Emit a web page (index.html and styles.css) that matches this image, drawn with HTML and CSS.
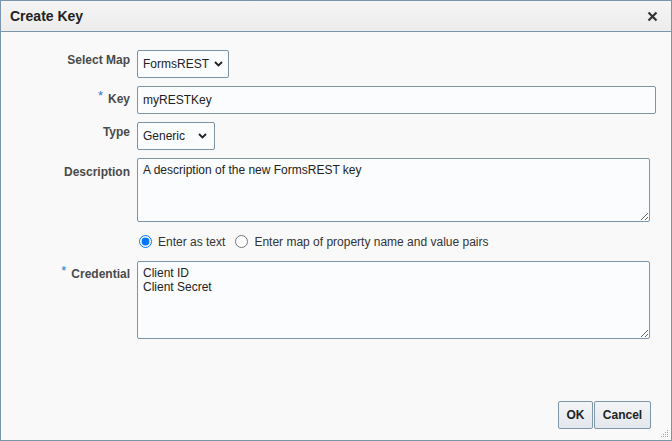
FILE: index.html
```html
<!DOCTYPE html>
<html lang="en">
<head>
<meta charset="utf-8">
<title>Create Key</title>
<link rel="stylesheet" href="styles.css">
</head>
<body>
<div class="dialog">
  <div class="header">
    <span class="title">Create Key</span>
    <svg class="close" width="11" height="11" viewBox="0 0 11 11"><path d="M1.5 1.5 L9.5 9.5 M9.5 1.5 L1.5 9.5" stroke="#333" stroke-width="2.2" fill="none"/></svg>
  </div>
  <div class="form">
    <div class="label l-select">Select Map</div>
    <div class="field"><div class="select sel-map"><span>FormsREST</span><svg width="9" height="6" viewBox="0 0 9 6"><path d="M1 1 L4.5 4.5 L8 1" stroke="#222" stroke-width="1.8" fill="none"/></svg></div></div>

    <div class="label l-key"><span class="req">*</span>Key</div>
    <div class="field"><input class="text key" type="text" value="myRESTKey"></div>

    <div class="label l-select">Type</div>
    <div class="field"><div class="select sel-type"><span>Generic</span><svg width="9" height="6" viewBox="0 0 9 6"><path d="M1 1 L4.5 4.5 L8 1" stroke="#222" stroke-width="1.8" fill="none"/></svg></div></div>

    <div class="label l-area">Description</div>
    <div class="field"><textarea class="area desc">A description of the new FormsREST key</textarea></div>

    <div class="label"></div>
    <div class="field radios">
      <label class="radio"><input type="radio" name="mode" checked><span>Enter as text</span></label>
      <label class="radio"><input type="radio" name="mode"><span>Enter map of property name and value pairs</span></label>
    </div>

    <div class="label l-cred"><span class="req">*</span>Credential</div>
    <div class="field"><textarea class="area cred">Client ID
Client Secret</textarea></div>
  </div>
  <div class="footer">
    <button class="btn ok">OK</button><button class="btn cancel">Cancel</button>
  </div>
  <svg class="grip" width="9" height="9" viewBox="0 0 9 9">
    <g fill="#9aa3ab">
      <rect x="7" y="1" width="1" height="1"/>
      <rect x="5" y="3" width="1" height="1"/><rect x="7" y="3" width="1" height="1"/>
      <rect x="3" y="5" width="1" height="1"/><rect x="5" y="5" width="1" height="1"/><rect x="7" y="5" width="1" height="1"/>
      <rect x="1" y="7" width="1" height="1"/><rect x="3" y="7" width="1" height="1"/><rect x="5" y="7" width="1" height="1"/><rect x="7" y="7" width="1" height="1"/>
    </g>
  </svg>
</div>
</body>
</html>
```
FILE: styles.css
```css
html, body {
  margin: 0;
  padding: 0;
  background: #f9f9f9;
}
body {
  font-family: "Liberation Sans", Arial, sans-serif;
  font-size: 12px;
  color: #333;
}
.dialog {
  position: relative;
  width: 672px;
  height: 441px;
  box-sizing: border-box;
  border: 1px solid #7b96ab;
  background: #f9f9f9;
  display: flex;
  flex-direction: column;
}
.header {
  height: 30px;
  border-bottom: 1px solid #7b96ab;
  background: linear-gradient(#f5f5f5, #ececec);
  display: flex;
  align-items: center;
  justify-content: space-between;
  padding: 0 13px 0 9px;
}
.title {
  font-size: 14px;
  font-weight: bold;
  color: #222;
}
.close {
  display: block;
}
.form {
  display: grid;
  grid-template-columns: 129px 1fr;
  column-gap: 7px;
  row-gap: 8px;
  padding-top: 18px;
}
.label {
  text-align: right;
  font-weight: bold;
  color: #4a4a4a;
  line-height: 14px;
}
.l-select { padding-top: 3px; }
.l-key { padding-top: 6px; }
.l-area { padding-top: 7px; }
.l-cred { padding-top: 6px; }
.req {
  color: #2a77c9;
  font-weight: normal;
  font-size: 13px;
  position: relative;
  top: -3px;
  margin-right: 5px;
}
.field {
  display: flex;
}
.select {
  box-sizing: border-box;
  height: 28px;
  border: 1px solid #7d93a6;
  border-radius: 2px;
  background: #fbfcfe;
  display: flex;
  align-items: center;
  justify-content: space-between;
  padding: 0 5px 0 5px;
  color: #222;
}
.sel-map { width: 92px; }
.sel-type { width: 78px; padding-right: 7px; }
.text {
  box-sizing: border-box;
  height: 28px;
  border: 1px solid #7d93a6;
  border-radius: 2px;
  background: #fbfcfe;
  font-family: inherit;
  font-size: 12px;
  color: #222;
  padding: 0 5px;
  margin: 0;
  outline: none;
}
.key { width: 519px; }
.area {
  box-sizing: border-box;
  width: 513px;
  border: 1px solid #7d93a6;
  border-radius: 2px;
  background: #fbfcfe;
  font-family: inherit;
  font-size: 12px;
  line-height: 14px;
  color: #222;
  padding: 4px 5px;
  margin: 0;
  outline: none;
}
.desc { height: 64px; }
.cred { height: 78px; }
.radios {
  display: flex;
  align-items: center;
  height: 23px;
  padding-left: 2px;
  gap: 10px;
}
.radio {
  display: flex;
  align-items: center;
  gap: 6px;
  color: #333;
}
.radio input {
  margin: 0;
  width: 13px;
  height: 13px;
}
.footer {
  margin-top: auto;
  display: flex;
  justify-content: flex-end;
  padding: 0 20px 11px 0;
}
.btn {
  box-sizing: border-box;
  height: 28px;
  border: 1px solid #7f96a8;
  border-radius: 2px;
  background: linear-gradient(#f3f5f7, #e3e8ec);
  font-family: inherit;
  font-size: 12px;
  font-weight: bold;
  color: #222;
  padding: 0;
  margin: 0;
}
.ok { width: 35px; margin-right: 1px; }
.cancel { width: 57px; }
.grip {
  position: absolute;
  right: 2px;
  bottom: 2px;
}
```
